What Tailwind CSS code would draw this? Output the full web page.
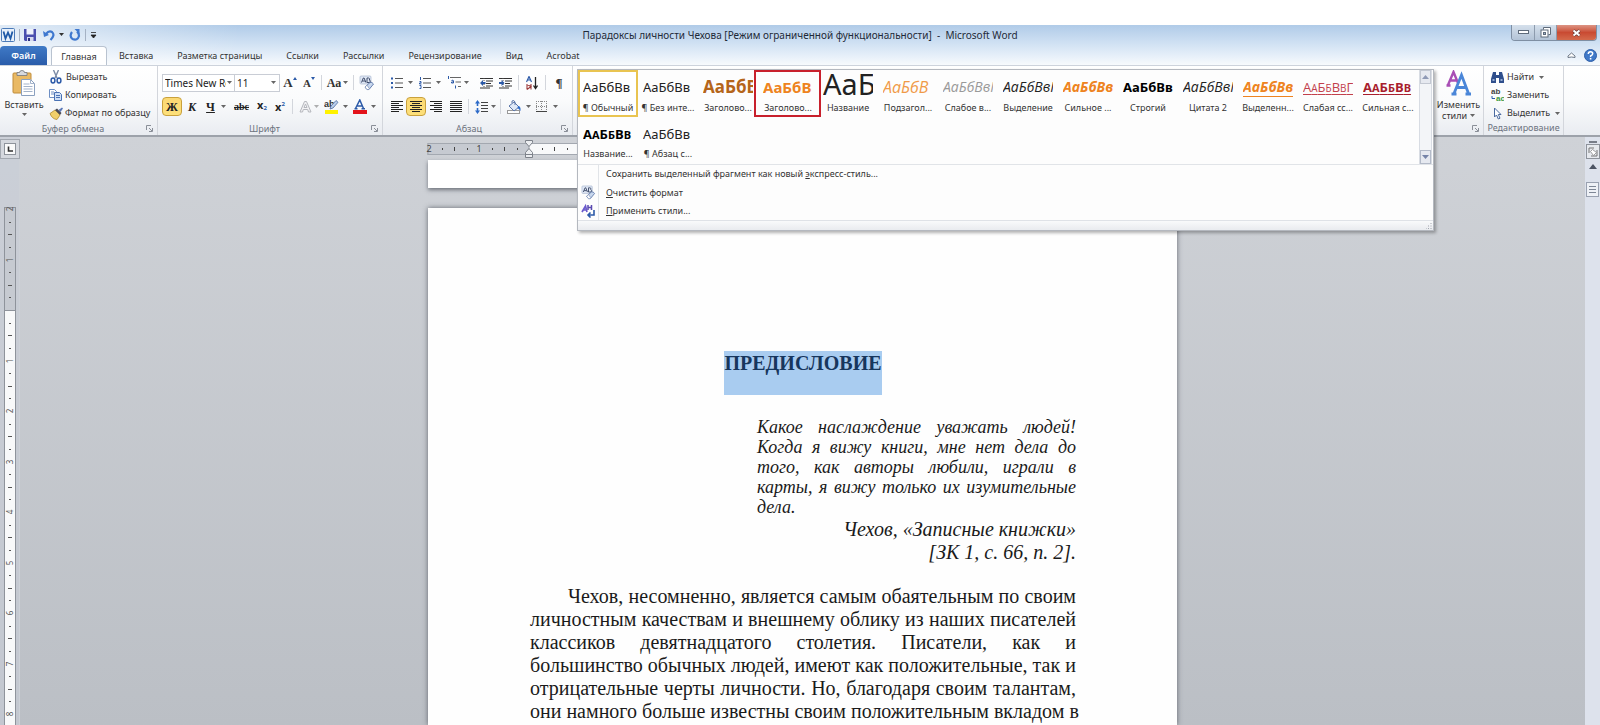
<!DOCTYPE html>
<html lang="ru">
<head>
<meta charset="utf-8">
<title>Парадоксы личности Чехова - Microsoft Word</title>
<script src="https://cdn.jsdelivr.net/npm/@tailwindcss/browser@4"></script>
</head>
<body class="h-screen overflow-hidden bg-white pt-[25px] flex flex-col font-['Noto_Sans','Open_Sans',sans-serif] text-[9px] leading-3 text-[#333]">

<svg width="0" height="0" class="absolute" aria-hidden="true">
  <defs>
    <symbol id="arr" viewBox="0 0 5 3"><path d="M0 0h5L2.500 3z" fill="#666"/></symbol>
    <symbol id="launch" viewBox="0 0 7 7"><path d="M.5 5V.5H5" fill="none" stroke="#8a8f98"/><path d="M3 3l3 3M6.500 3v3.500H3" fill="none" stroke="#8a8f98"/></symbol>
    <symbol id="eraser" viewBox="0 0 16 16"><rect x="1" y="1" width="11" height="8" rx="1" fill="#dfe7f4" stroke="#a9b7d0" stroke-width=".7"/><path d="M2.500 7.500L4.300 3h.8l1.800 4.500M3.300 6h2.800M8 7.500V3h1.500q1.500.2 1 2q1.500.8.300 2.500z" fill="none" stroke="#3f4c6b" stroke-width="1"/><path d="M6 12l5-4.500q2-.8 3.500 1.500L10 14.500H8z" fill="#c9d8ee" stroke="#5b76a8" stroke-width=".9"/><path d="M6 12l2-1.800 2.300 3.300L9.500 14.600H8z" fill="#fff" stroke="#7d91b8" stroke-width=".7"/></symbol>
  </defs>
</svg>

<!-- Title bar and tabs -->
<header class="shrink-0 bg-linear-to-b from-[#b0cbe8] via-[#d3e3f4] to-[#f7fafd]">
 <div class="bg-linear-to-r from-white/60 via-transparent via-15% to-transparent">
  <div class="flex items-start h-[21px]">
    <div class="flex items-center gap-1 w-[300px] h-[19px] pl-px">
      <svg width="14" height="14" viewBox="0 0 14 14"><rect x=".5" y=".5" width="13" height="13" rx="1" fill="#e8f1fb" stroke="#4b7ab8"/><path d="M2.500 3.500L4.500 10.500L7 4.500L9.500 10.500L11.500 3.500" fill="none" stroke="#1f5aa8" stroke-width="1.800"/></svg>
      <span class="w-px h-3 bg-[#a5b2c4]"></span>
      <button aria-label="Сохранить"><svg width="12" height="12" viewBox="0 0 12 12"><path d="M0 0h12v12H1L0 11z" fill="#4a4fae"/><rect x="2.500" y="0" width="7" height="5.500" fill="#eef2fb"/><rect x="3" y="8" width="6.500" height="4" fill="#d5d9ee"/><rect x="4" y="9" width="2" height="3" fill="#2c3180"/></svg></button>
      <button aria-label="Отменить" class="ml-[3px]"><svg width="12" height="12" viewBox="0 0 12 12"><path d="M3 5q3-4 6-2q3.500 3-1.500 8" fill="none" stroke="#3f78cf" stroke-width="2.200"/><path d="M0 2l1 6 5-2z" fill="#3f78cf"/></svg></button>
      <svg width="5" height="3"><path d="M0 0h5L2.500 3z" fill="#333"/></svg>
      <button aria-label="Повторить" class="ml-px"><svg width="12" height="12" viewBox="0 0 12 12"><path d="M3 3q-3 4 .5 7q5 2 6.500-3q0-3-2-4.500" fill="none" stroke="#3f78cf" stroke-width="2.200"/><path d="M5.500 0h5v5z" fill="#3f78cf"/></svg></button>
      <span class="w-px h-3 bg-[#a5b2c4]"></span>
      <button aria-label="Настройка панели"><svg width="7" height="8"><path d="M1 1.500h5M1 4h5L3.500 7z" fill="#222" stroke="#222" stroke-width=".8"/></svg></button>
    </div>
    <h1 class="flex-1 text-center text-[10px] leading-[20px] text-[#1e2a38]">Парадоксы личности Чехова [Режим ограниченной функциональности] &nbsp;-&nbsp; Microsoft Word</h1>
    <div class="w-[300px] flex justify-end pr-[3px]">
      <div class="flex h-[16px] rounded-b border border-t-0 border-[#7f8fa3] overflow-hidden">
        <button aria-label="Свернуть" class="w-[23px] grid place-items-center border-r border-[#8d9bad] bg-linear-to-b from-[#d5e0ec] to-[#b3c3d6]"><svg width="11" height="5"><rect x=".5" y=".5" width="10" height="3" fill="#fff" stroke="#5f6b7a"/></svg></button>
        <button aria-label="Свернуть в окно" class="w-[22px] grid place-items-center border-r border-[#8d9bad] bg-linear-to-b from-[#d5e0ec] to-[#b3c3d6]"><svg width="11" height="11"><path d="M3.500 2.500v-2h7v7h-2" fill="#fff" stroke="#5f6b7a"/><rect x="1" y="3" width="7" height="7" fill="#fff" stroke="#5f6b7a"/><rect x="3.500" y="5.500" width="2" height="2" fill="#9fb3cc" stroke="#5f6b7a"/></svg></button>
        <button aria-label="Закрыть" class="w-[39px] grid place-items-center bg-linear-to-b from-[#dc9484] via-[#c94a32] to-[#d46a4c]"><svg width="9" height="8" viewBox="0 0 9 8"><path d="M1.500 1.500l6 5M7.500 1.500l-6 5" stroke="#5c3a38" stroke-width="3.200"/><path d="M1.500 1.500l6 5M7.500 1.500l-6 5" stroke="#fff" stroke-width="2"/></svg></button>
      </div>
    </div>
  </div>
  <nav class="flex h-[19px] leading-[19px]">
    <button class="w-[47px] mr-1 rounded-t-sm bg-linear-to-b from-[#3f7ac6] to-[#2a5caa] text-white font-semibold">Файл</button>
    <button class="w-[56px] h-[20px] rounded-t-sm border border-b-0 border-[#b9c3d0] bg-white leading-[18px]">Главная</button>
    <button class="px-3">Вставка</button>
    <button class="px-3">Разметка страницы</button>
    <button class="px-3">Ссылки</button>
    <button class="px-3">Рассылки</button>
    <button class="px-3">Рецензирование</button>
    <button class="px-3">Вид</button>
    <button class="px-3">Acrobat</button>
    <div class="ml-auto flex items-center gap-2 pr-[3px]">
      <button aria-label="Свернуть ленту"><svg width="9" height="7"><path d="M1 5.500V4L4.500 1L8 4v1.500L4.500 5z" fill="#fff" stroke="#5f6b7a" stroke-width=".9"/></svg></button>
      <button aria-label="Справка"><svg width="13" height="13" viewBox="0 0 13 13"><circle cx="6.500" cy="6.500" r="6" fill="#3f78c8" stroke="#2f5fa8"/><path d="M4.300 5q0-2.200 2.200-2.200T8.700 4.800Q8.700 6 6.600 7v1" fill="none" stroke="#fff" stroke-width="1.500"/><rect x="5.800" y="8.900" width="1.600" height="1.600" fill="#fff"/></svg></button>
    </div>
  </nav>
 </div>
</header>

<!-- Ribbon -->
<section class="relative z-20 shrink-0 flex h-[72px] border-t border-t-[#cdd3dc] border-b-2 border-b-[#9da2aa] bg-linear-to-b from-white via-[#fafbfc] to-[#e9ecf1]">
  <div class="flex flex-col w-[158px] border-r border-[#d3d6dc]">
    <div class="flex flex-1">
      <button class="w-[48px] flex flex-col items-center pt-1">
        <svg width="24" height="26" viewBox="0 0 24 26"><rect x="1" y="3" width="18" height="20" rx="1" fill="#e9b964" stroke="#c08c3a"/><path d="M5 2.500h2.500q0-2 2.500-2t2.500 2H15v3H5z" fill="#d7d9de" stroke="#72767e" stroke-width=".8"/><path d="M9.500 9.500h9l4 4v12h-13z" fill="#fff" stroke="#8aa0bf"/><path d="M18.500 9.500v4h4M11.500 14h6M11.500 16.500h9M11.500 19h9M11.500 21.500h9" fill="none" stroke="#a3b3ca"/></svg>
        <span class="mt-[3px]">Вставить</span>
        <svg class="mt-[2px]" width="5" height="3"><use href="#arr"/></svg>
      </button>
      <div class="flex flex-col pt-[2px] whitespace-nowrap">
        <button class="flex items-center gap-[4px] h-[18px] pl-[2px]"><svg width="12" height="14" viewBox="0 0 12 14"><path d="M3.500 0l3.500 8M8.500 0L5 8" stroke="#7a8aa5" stroke-width="1.400"/><ellipse cx="3" cy="10.500" rx="1.900" ry="2.500" fill="none" stroke="#2c5aa8" stroke-width="1.500"/><ellipse cx="9" cy="10.500" rx="1.900" ry="2.500" fill="none" stroke="#2c5aa8" stroke-width="1.500"/></svg>Вырезать</button>
        <button class="flex items-center gap-[3px] h-[18px] pl-px"><svg width="13" height="12" viewBox="0 0 13 12"><path d="M.5.5h5l2 2v6h-7z" fill="#fff" stroke="#6d8fc4"/><path d="M2 3h3M2 5h3" stroke="#6d8fc4"/><path d="M5.500 3.500h5l2 2v6h-7z" fill="#cfe0f7" stroke="#4a72b4"/><path d="M7 6.500h4M7 8.500h4" stroke="#4a72b4"/></svg>Копировать</button>
        <button class="flex items-center gap-px h-[18px] pl-px"><svg width="15" height="13" viewBox="0 0 15 13"><path d="M1 6.500L6 3l5 5-3 4.500Q3 12 1 6.500z" fill="#f1cf6a" stroke="#b08a2e" stroke-width=".8"/><path d="M6 3l2-1.500 4.500 4.500L11 8z" fill="#4a4a55"/><path d="M9.500 3L13 .500l1 1L11.500 5z" fill="#5a78b8"/></svg>Формат по образцу</button>
      </div>
    </div>
    <div class="flex items-center h-[13px] pr-1 text-[#6c737e]"><span class="flex-1 text-center">Буфер обмена</span><svg width="7" height="7"><use href="#launch"/></svg></div>
  </div>

  <div class="flex flex-col w-[225px] border-r border-[#d3d6dc]">
    <div class="flex-1 pl-1 pt-[7px] flex flex-col gap-[5px]">
      <div class="flex items-center h-[19px]">
        <div class="relative w-[73px]"><select aria-label="Шрифт" class="appearance-none w-full h-[18px] pl-[2px] pr-2 border border-[#c9cdd5] bg-white text-[10px] text-[#222]"><option>Times New Ro</option></select><svg class="absolute right-[3px] top-[7px] pointer-events-none" width="5" height="3"><use href="#arr"/></svg></div>
        <div class="relative w-[45px]"><select aria-label="Размер шрифта" class="appearance-none w-full h-[18px] pl-[2px] border border-l-0 border-[#c9cdd5] bg-white text-[10px] text-[#222]"><option>11</option></select><svg class="absolute right-1 top-[7px] pointer-events-none" width="5" height="3"><use href="#arr"/></svg></div>
        <button class="w-[20px] flex justify-center font-['Liberation_Serif',serif] font-bold text-[13px]">A<svg width="4" height="3"><path d="M0 3L2 0l2 3z" fill="#2c5aa8"/></svg></button>
        <button class="w-[18px] flex justify-center font-['Liberation_Serif',serif] font-bold text-[11px]">A<svg width="4" height="3"><path d="M0 0h4L2 3z" fill="#2c5aa8"/></svg></button>
        <span class="w-px h-[15px] mx-[3px] bg-[#d3d6dc]"></span>
        <button class="w-[25px] flex items-center justify-center gap-[2px] font-['Liberation_Serif',serif] font-bold text-[12px]">Aa<svg width="5" height="3"><use href="#arr"/></svg></button>
        <span class="w-px h-[15px] mx-[3px] bg-[#d3d6dc]"></span>
        <button aria-label="Очистить формат" class="w-[20px] grid place-items-center"><svg width="16" height="16"><use href="#eraser"/></svg></button>
      </div>
      <div class="flex items-center h-[19px] font-['Liberation_Serif',serif] font-bold text-[12px] text-[#222]">
        <button class="w-[20px] h-[19px] rounded-sm border border-[#c9a13c] bg-linear-to-b from-[#fbd873] to-[#fde07a]">Ж</button>
        <button class="w-[20px] italic">К</button>
        <button class="w-[28px] flex items-center justify-center gap-[6px]"><span class="underline">Ч</span><svg width="5" height="3"><use href="#arr"/></svg></button>
        <button class="w-[23px] line-through text-[10px]">abc</button>
        <button class="w-[18px] font-['Noto_Sans',sans-serif] flex justify-center text-[11px]">x<span class="text-[6px] pt-[3px] text-[#2c5aa8]">2</span></button>
        <button class="w-[18px] font-['Noto_Sans',sans-serif] flex justify-center text-[11px]">x<span class="text-[6px] leading-[6px] text-[#2c5aa8]">2</span></button>
        <span class="w-px h-[15px] mx-[3px] bg-[#d3d6dc]"></span>
        <button aria-label="Эффекты текста" class="w-[26px] flex items-center justify-center gap-[2px]"><svg width="13" height="13" viewBox="0 0 13 13"><path d="M1 12L5.500 1.500h2L12 12H9.500L8.700 9.500H4.300L3.500 12zM5 7.500h3L6.500 4z" fill="#f2f2f4" stroke="#b5b7bd"/></svg><svg class="opacity-50" width="5" height="3"><use href="#arr"/></svg></button>
        <button aria-label="Цвет выделения" class="w-[28px] flex items-center justify-center gap-[4px]"><svg width="15" height="15" viewBox="0 0 15 15"><rect x="1" y="11" width="13" height="4" fill="#fff200"/><text x="0" y="8" font-size="9" font-weight="700" font-family="Liberation Sans, sans-serif" fill="#333">ab</text><path d="M6 10l1-3 5-5.500 2 1.800L9 9z" fill="#b9cdea" stroke="#4a6aa0" stroke-width=".8"/></svg><svg width="5" height="3"><use href="#arr"/></svg></button>
        <button aria-label="Цвет текста" class="w-[28px] flex items-center justify-center gap-[4px]"><svg width="14" height="15" viewBox="0 0 14 15"><rect x="0" y="11" width="14" height="4" fill="#e3131b"/><path d="M2.500 9.500L6.800 1l3.700 8.500M4 7h5M1.500 9.800h3M8.500 9.800H12" fill="none" stroke="#2c5aa8" stroke-width="1.500"/></svg><svg width="5" height="3"><use href="#arr"/></svg></button>
      </div>
    </div>
    <div class="flex items-center h-[13px] pr-1 text-[#6c737e]"><span class="flex-1 text-center">Шрифт</span><svg width="7" height="7"><use href="#launch"/></svg></div>
  </div>

  <div class="flex flex-col w-[190px] border-r border-[#d3d6dc]">
    <div class="flex-1 pl-[5px] pt-[7px] flex flex-col gap-[5px]">
      <div class="flex items-center h-[19px]">
        <button aria-label="Маркеры" class="w-[28px] flex items-center justify-center gap-[5px]"><svg width="12" height="12"><path d="M0 1.500h2M0 6h2M0 10.500h2" stroke="#2c5aa8" stroke-width="2"/><path d="M4 1.500h8M4 6h8M4 10.500h8" stroke="#555"/></svg><svg width="5" height="3"><use href="#arr"/></svg></button>
        <button aria-label="Нумерация" class="w-[28px] flex items-center justify-center gap-[5px]"><svg width="12" height="12"><path d="M1.500 0v3M.5 4.500h1.500v1.500H.5v1h2M.5 8.500h1.500v3H.5" stroke="#2c5aa8" fill="none"/><path d="M4 1.500h8M4 6h8M4 10.500h8" stroke="#555"/></svg><svg width="5" height="3"><use href="#arr"/></svg></button>
        <button aria-label="Многоуровневый список" class="w-[28px] flex items-center justify-center gap-[3px]"><svg width="14" height="13"><path d="M1.500 0v3M4.500 4.500q2-1 2 .5v2h-2v-1h2M8.500 9.500v3" stroke="#2c5aa8" fill="none"/><path d="M3 1.500h11M8.500 6h5.500M11 10.500h3" stroke="#666"/></svg><svg width="5" height="3"><use href="#arr"/></svg></button>
        <button aria-label="Уменьшить отступ" class="w-[19px] ml-[5px] grid place-items-center"><svg width="13" height="12"><path d="M0 1.500h13M6 4h7M6 6.500h5M6 9h7M0 11h10" stroke="#333"/><path d="M4 1v10" stroke="#555" stroke-dasharray="1 1"/><path d="M0 6l3-3v2h2.500v2H3v2z" fill="#2c5aa8"/></svg></button>
        <button aria-label="Увеличить отступ" class="w-[19px] grid place-items-center"><svg width="13" height="12"><path d="M0 1.500h13M6 4h7M6 6.500h5M6 9h7M0 11h10" stroke="#333"/><path d="M4 1v10" stroke="#555" stroke-dasharray="1 1"/><path d="M5.500 6l-3-3v2H0v2h2.500v2z" fill="#2c5aa8"/></svg></button>
        <span class="w-px h-[15px] mx-[3px] bg-[#d3d6dc]"></span>
        <button aria-label="Сортировка" class="w-[20px] grid place-items-center"><svg width="12" height="14"><path d="M.5 6L3 .5 5.500 6M1.500 4h3" fill="none" stroke="#2c5aa8" stroke-width="1.200"/><path d="M1 8v5.500M5 8v5.500M1 8.500l4 2-4 3" fill="none" stroke="#9c3a3a" stroke-width="1.100"/><path d="M9.500 1v11M7.500 9.500l2 3 2-3" fill="none" stroke="#222" stroke-width="1.300"/></svg></button>
        <span class="w-px h-[15px] mx-[3px] bg-[#d3d6dc]"></span>
        <button class="w-[20px] text-[13px] font-bold text-[#333] font-['Liberation_Serif',serif]">¶</button>
      </div>
      <div class="flex items-center h-[19px]">
        <button aria-label="По левому краю" class="w-[18px] grid place-items-center"><svg width="12" height="11"><path d="M0 .5h12M0 2.500h8M0 4.500h12M0 6.500h8M0 8.500h12M0 10.500h8" stroke="#222"/></svg></button>
        <button aria-label="По центру" class="w-[20px] h-[19px] grid place-items-center rounded-sm border border-[#c9a13c] bg-linear-to-b from-[#fbd873] to-[#fde07a]"><svg width="12" height="11"><path d="M0 .5h12M2 2.500h8M0 4.500h12M2 6.500h8M0 8.500h12M2 10.500h8" stroke="#222"/></svg></button>
        <button aria-label="По правому краю" class="w-[20px] grid place-items-center"><svg width="12" height="11"><path d="M0 .5h12M4 2.500h8M0 4.500h12M4 6.500h8M0 8.500h12M4 10.500h8" stroke="#222"/></svg></button>
        <button aria-label="По ширине" class="w-[20px] grid place-items-center"><svg width="12" height="11"><path d="M0 .5h12M0 2.500h12M0 4.500h12M0 6.500h12M0 8.500h12M0 10.500h12" stroke="#222"/></svg></button>
        <span class="w-px h-[15px] ml-[2px] mr-[4px] bg-[#d3d6dc]"></span>
        <button aria-label="Интервал" class="w-[24px] flex items-center justify-center gap-[3px]"><svg width="13" height="14"><path d="M2.500 0L5 3.500H3.300V6H1.700V3.500H0zM2.500 14L5 10.500H3.300V8H1.700v2.500H0z" fill="#2c6ac8"/><path d="M6 2.500h7M6 5.500h7M6 8.500h7M6 11.500h7" stroke="#444"/></svg><svg width="5" height="3"><use href="#arr"/></svg></button>
        <span class="w-px h-[15px] mx-[3px] bg-[#d3d6dc]"></span>
        <button aria-label="Заливка" class="w-[30px] flex items-center justify-center gap-[4px]"><svg width="15" height="14"><rect x=".5" y="10.500" width="12" height="3" fill="#fff" stroke="#999"/><path d="M2 6l5-4 5 5-5 4z" fill="#dfe9f7" stroke="#5b76a8"/><path d="M5 3V1q2-1.500 3 1v3" fill="none" stroke="#5b76a8"/><path d="M11 6q3 0 2.500 5-1.500-2-3-3z" fill="#2c6ac8"/></svg><svg width="5" height="3"><use href="#arr"/></svg></button>
        <button aria-label="Границы" class="w-[26px] flex items-center justify-center gap-[6px]"><svg width="11" height="11"><path d="M.5 0v11M10.500 0v11M5.500 0v11M0 .5h11M0 5.500h11" fill="none" stroke="#888" stroke-dasharray="1 1"/><path d="M0 10.500h11" stroke="#444"/></svg><svg width="5" height="3"><use href="#arr"/></svg></button>
      </div>
    </div>
    <div class="flex items-center h-[13px] pr-1 text-[#6c737e]"><span class="flex-1 pr-[6px] text-center">Абзац</span><svg width="7" height="7"><use href="#launch"/></svg></div>
  </div>

  <!-- Style gallery, expanded over the page -->
  <div class="relative flex-1">
    <div class="absolute top-[3px] left-1 right-0 border border-[#b4b8bf] bg-[#fdfdfd] shadow-[2px_2px_3px_rgba(0,0,0,0.3)]">
      <div class="flex border-b border-[#e1e4e8]">
        <div class="flex-1 flex flex-wrap content-start h-[94px] text-center whitespace-nowrap">
          <button class="w-[60px] h-[47px] bg-white outline-2 -outline-offset-2 outline-[#e9c451] ring-1 ring-inset ring-[#c9a13c]"><span class="block mx-[5px] h-[24px] mt-1 overflow-hidden text-left text-[13px] leading-[20px] text-[#222]">АаБбВв</span><span class="block leading-[14px]">¶ Обычный</span></button>
          <button class="w-[60px] h-[47px]"><span class="block mx-[5px] h-[24px] mt-1 overflow-hidden text-left text-[13px] leading-[20px] text-[#222]">АаБбВв</span><span class="block leading-[14px]">¶ Без инте...</span></button>
          <button class="w-[60px] h-[47px]"><span class="block mx-[5px] h-[24px] mt-1 overflow-hidden text-left text-[17px] leading-[20px] font-bold text-[#b5651a]">АаБбВ</span><span class="block leading-[14px]">Заголово...</span></button>
          <button class="relative w-[60px] h-[47px]"><span class="block mx-[5px] h-[24px] mt-1 overflow-hidden text-left text-[15px] leading-[20px] font-bold text-[#ee8320]">АаБбВ</span><span class="block leading-[14px]">Заголово...</span><span class="absolute top-0 -left-1 -right-[3px] h-[47px] border-2 border-[#c8202c]"></span></button>
          <button class="w-[60px] h-[47px]"><span class="block mx-[5px] h-[28px] overflow-hidden text-left text-[29px] leading-[22px] text-[#222]">АаБ</span><span class="block leading-[14px]">Название</span></button>
          <button class="w-[60px] h-[47px]"><span class="block mx-[5px] h-[24px] mt-1 overflow-hidden text-left font-['Open_Sans',sans-serif] text-[16px] leading-[20px] italic text-[#f09a48]">АаБбВ</span><span class="block leading-[14px]">Подзагол...</span></button>
          <button class="w-[60px] h-[47px]"><span class="block mx-[5px] h-[24px] mt-1 overflow-hidden text-left font-['Open_Sans',sans-serif] text-[14px] leading-[20px] italic text-[#999]">АаБбВвГ</span><span class="block leading-[14px]">Слабое в...</span></button>
          <button class="w-[60px] h-[47px]"><span class="block mx-[5px] h-[24px] mt-1 overflow-hidden text-left font-['Open_Sans',sans-serif] text-[14px] leading-[20px] italic text-[#222]">АаБбВвГ</span><span class="block leading-[14px]">Выделение</span></button>
          <button class="w-[60px] h-[47px]"><span class="block mx-[5px] h-[24px] mt-1 overflow-hidden text-left font-['Open_Sans',sans-serif] text-[14px] leading-[20px] italic font-bold text-[#ee8320]">АаБбВв</span><span class="block leading-[14px]">Сильное ...</span></button>
          <button class="w-[60px] h-[47px]"><span class="block mx-[5px] h-[24px] mt-1 overflow-hidden text-left text-[13px] leading-[20px] font-bold text-black">АаБбВв</span><span class="block leading-[14px]">Строгий</span></button>
          <button class="w-[60px] h-[47px]"><span class="block mx-[5px] h-[24px] mt-1 overflow-hidden text-left font-['Open_Sans',sans-serif] text-[14px] leading-[20px] italic text-[#222]">АаБбВвГ</span><span class="block leading-[14px]">Цитата 2</span></button>
          <button class="w-[60px] h-[47px]"><span class="block mx-[5px] h-[24px] mt-1 overflow-hidden text-left font-['Open_Sans',sans-serif] text-[14px] leading-[20px] italic font-bold underline underline-offset-4 decoration-1 text-[#ee8320]">АаБбВв</span><span class="block leading-[14px]">Выделенн...</span></button>
          <button class="w-[60px] h-[47px]"><span class="block mx-[5px] h-[24px] mt-1 overflow-hidden text-left font-['Open_Sans',sans-serif] text-[13px] leading-[20px] underline underline-offset-2 text-[#c2404c]">А<span class="text-[10px]">А</span>Б<span class="text-[10px]">Б</span>В<span class="text-[10px]">В</span>Г</span><span class="block leading-[14px]">Слабая сс...</span></button>
          <button class="w-[60px] h-[47px]"><span class="block mx-[5px] h-[24px] mt-1 overflow-hidden text-left font-['Open_Sans',sans-serif] text-[13px] leading-[20px] font-bold underline underline-offset-2 text-[#a81e2d]">А<span class="text-[11px]">А</span>Б<span class="text-[11px]">Б</span>В<span class="text-[11px]">В</span></span><span class="block leading-[14px]">Сильная с...</span></button>
          <button class="w-[60px] h-[47px]"><span class="block mx-[5px] h-[23px] mt-[3px] overflow-hidden text-left font-['Open_Sans',sans-serif] text-[13px] leading-[20px] font-bold text-black">А<span class="text-[11px]">А</span>Б<span class="text-[11px]">Б</span>В<span class="text-[11px]">В</span></span><span class="block leading-[14px]">Название...</span></button>
          <button class="w-[60px] h-[47px]"><span class="block mx-[5px] h-[23px] mt-[3px] overflow-hidden text-left text-[13px] leading-[20px] text-[#222]">АаБбВв</span><span class="block leading-[14px]">¶ Абзац с...</span></button>
        </div>
        <div class="w-[13px] mr-px flex flex-col justify-between border-x border-[#d8dce3] bg-[#f3f5f8]">
          <button aria-label="Вверх" class="h-[14px] grid place-items-center border border-[#c3c8d2] bg-[#e6e9f0]"><svg width="7" height="4"><path d="M0 4L3.500 0 7 4z" fill="#8e99b5"/></svg></button>
          <button aria-label="Вниз" class="h-[14px] grid place-items-center border border-[#b3bac8] bg-[#e6e9f0]"><svg width="7" height="4"><path d="M0 0h7L3.500 4z" fill="#7684a8"/></svg></button>
        </div>
      </div>
      <div class="flex flex-col">
        <button class="flex h-[18px] items-center"><span class="w-[21px] h-full border-r border-[#e1e4e8]"></span><span class="pl-[7px]">Сохранить выделенный фрагмент как новый <u>э</u>кспресс-стиль...</span></button>
        <button class="flex h-[19px] items-center"><span class="w-[21px] h-full border-r border-[#e1e4e8] grid place-items-center"><svg width="15" height="15"><use href="#eraser"/></svg></span><span class="pl-[7px]"><u>О</u>чистить формат</span></button>
        <button class="flex h-[18px] items-center"><span class="w-[21px] h-full border-r border-[#e1e4e8] grid place-items-center"><svg width="14" height="14" viewBox="0 0 14 14"><path d="M1 8L4.500 2 6 8M2.500 6h3" fill="none" stroke="#6a5acd" stroke-width="1.700"/><path d="M7 1v5M10.500 1v5M7 3.500h3.500" stroke="#5a4ab0" stroke-width="1.500"/><path d="M13 6v5H8M9.500 8.500L7 11l2.500 2.500" fill="none" stroke="#2c5aa8" stroke-width="1.600"/></svg></span><span class="pl-[7px]"><u>П</u>рименить стили...</span></button>
      </div>
      <div class="h-[10px] flex justify-end items-end p-px border-t border-[#dfe2e7] bg-linear-to-b from-[#f9fafb] to-[#e9ebef]"><svg width="6" height="6"><path d="M5 0v1M5 2.500v1M5 5v1M2.500 2.500v1M2.500 5v1M0 5v1" stroke="#a0a5ae"/></svg></div>
    </div>
  </div>

  <div class="flex flex-col w-[50px] border-r border-[#d3d6dc]">
    <button class="flex-1 flex flex-col items-center pt-[4px] leading-[11px]">
      <svg class="shrink-0" width="26" height="26" viewBox="0 0 26 26"><path d="M2 15L7.500 2l4.500 11M4 10.500h7M.5 15.500h4" fill="none" stroke="#a94fb5" stroke-width="2.400"/><path d="M8 23.500L15.500 5l7 18.500M10.500 17.500h9.500M5.500 24h5M19.500 24H25" fill="none" stroke="#4a86d8" stroke-width="2.800"/></svg>
      <span class="mt-[3px]">Изменить</span><span class="flex items-center gap-[3px]">стили <svg width="5" height="3"><use href="#arr"/></svg></span>
    </button>
    <div class="flex items-center justify-end h-[13px] pr-1"><svg width="7" height="7"><use href="#launch"/></svg></div>
  </div>
  <div class="flex flex-col w-[80px] mr-[36px] border-r border-[#d3d6dc]">
    <div class="flex-1 flex flex-col pt-[2px] pl-[7px]">
      <button class="flex items-center gap-[3px] h-[18px]"><svg width="13" height="12" viewBox="0 0 13 12"><path d="M2 1h3v3h3V1h3l2 7v4H8V7H5v5H0V8z" fill="#2f4f8c"/><path d="M1.500 9h2M9.500 9h2" stroke="#b9cdea" stroke-width="1.500"/></svg>Найти<svg class="ml-[2px]" width="5" height="3"><use href="#arr"/></svg></button>
      <button class="flex items-center gap-[3px] h-[18px]"><svg width="13" height="14" viewBox="0 0 13 14"><text x="0" y="6" font-size="8" font-weight="700" font-family="Liberation Sans, sans-serif" fill="#444">ab</text><text x="5" y="13" font-size="8" font-weight="700" font-family="Liberation Sans, sans-serif" fill="#3c9a3c">ac</text><path d="M1 8v2.500h3" fill="none" stroke="#2c5aa8"/></svg>Заменить</button>
      <button class="flex items-center gap-[3px] h-[18px]"><svg width="13" height="13" viewBox="0 0 13 13"><path d="M3.500 1v9l2-2 1.800 4 1.700-.8L7.300 7.500H10z" fill="#fff" stroke="#4a6aa0"/></svg>Выделить<svg class="ml-[2px]" width="5" height="3"><use href="#arr"/></svg></button>
    </div>
    <div class="h-[13px] text-center text-[#6c737e]">Редактирование</div>
  </div>
</section>

<!-- Workspace -->
<main class="flex-1 min-h-0 flex overflow-hidden bg-linear-to-b from-[#cfd2d7] to-[#bbbfc5]">
  <div class="w-5 shrink-0 flex flex-col border-r border-[#cdd1d7] bg-[#c8cdd7]/60">
    <button aria-label="Выбор табуляции" class="mt-[2px] w-[20px] h-[20px] shrink-0 grid place-items-center border border-[#a3a8b0] bg-[#d5d8de]"><svg width="12" height="12"><rect x=".5" y=".5" width="11" height="11" fill="#fafafa" stroke="#8e939b"/><path d="M4.500 3.500v4.500H9" fill="none" stroke="#333" stroke-width="1.600"/></svg></button>
    <svg id="vruler" class="mt-12 ml-1 flex-1 min-h-0" width="12" font-family="Noto Sans, sans-serif" font-size="8" fill="#555" text-anchor="middle"></svg>
  </div>

  <div class="flex-1 min-w-0 flex flex-col items-center">
    <div class="w-[749px] h-[23px] shrink-0 pt-[6px]">
      <svg id="hruler" class="block overflow-visible" width="749" height="16" font-family="Noto Sans, sans-serif" font-size="9" fill="#444" text-anchor="middle"></svg>
    </div>
    <div class="w-[749px] h-[28px] mb-5 shrink-0 bg-white shadow-[0_2px_4px_rgba(70,75,85,0.7)]"></div>
    <article class="w-[749px] flex-1 min-h-0 overflow-hidden pl-[102px] pr-[101px] pt-[143px] bg-[#fefefe] shadow-[0_0_5px_rgba(70,75,85,0.8)] font-['Liberation_Serif',serif] text-[20px] text-[#1a1a1a]">
      <div class="flex justify-center"><h2 class="bg-[#a9ccf0] h-[44px] leading-[25px] font-bold text-[#17365d]">ПРЕДИСЛОВИЕ</h2></div>
      <blockquote class="mt-[22px] ml-[227px] italic">
        <p class="text-[18px] leading-[20px]">
          <span class="block [text-align-last:justify]">Какое наслаждение уважать людей!</span>
          <span class="block [text-align-last:justify]">Когда я вижу книги, мне нет дела до</span>
          <span class="block [text-align-last:justify]">того, как авторы любили, играли в</span>
          <span class="block [text-align-last:justify]">карты, я вижу только их изумительные</span>
          <span class="block">дела.</span>
        </p>
        <p class="mt-px text-right leading-[23px]">Чехов, «Записные книжки»<br>[ЗК 1, с. 66, п. 2].</p>
      </blockquote>
      <p class="mt-[21px] leading-[23px]">
        <span class="block whitespace-nowrap pl-[38px] [text-align-last:justify]">Чехов, несомненно, является самым обаятельным по своим</span>
        <span class="block whitespace-nowrap [text-align-last:justify]">личностным качествам и внешнему облику из наших писателей</span>
        <span class="block whitespace-nowrap [text-align-last:justify]">классиков девятнадцатого столетия. Писатели, как и</span>
        <span class="block whitespace-nowrap [text-align-last:justify]">большинство обычных людей, имеют как положительные, так и</span>
        <span class="block whitespace-nowrap [text-align-last:justify]">отрицательные черты личности. Но, благодаря своим талантам,</span>
        <span class="block whitespace-nowrap [text-align-last:justify]">они намного больше известны своим положительным вкладом в</span>
      </p>
    </article>
  </div>

  <div class="w-[15px] shrink-0 flex flex-col items-center bg-[#dde2ec]">
    <span class="w-2 h-[2px] mt-1 bg-[#777d88]"></span>
    <button aria-label="Линейка" class="w-[14px] h-[15px] mt-px grid place-items-center border border-[#8e939b] bg-[#e6e9ee]"><svg width="10" height="10"><path d="M1 6V1h5M3 9h6V3" fill="none" stroke="#777"/><path d="M2.500 4.500l2-2 4 3-3 3z" fill="#fff" stroke="#888" stroke-width=".8"/></svg></button>
    <button aria-label="Прокрутить вверх" class="h-[14px] grid place-items-center"><svg width="8" height="5"><path d="M0 5L4 0l4 5z" fill="#4c5463"/></svg></button>
    <button aria-label="Ползунок" class="w-[13px] h-[15px] mt-[9px] grid place-items-center border border-[#99a1b0] bg-[#eef1f6]"><svg width="7" height="7"><path d="M0 .5h7M0 3.500h7M0 6.500h7" stroke="#7e8796"/></svg></button>
  </div>
</main>

<script>
// Ruler scales: a figure per centimetre, a dash per half and a dot per quarter
function scale(cm, from, to, zero, vertical) {
  let out = '';
  for (let q = from; q <= to; q++) {
    if (q === 0) continue;
    const p = Math.round(zero + q * cm / 4);
    if (q % 4 === 0) {
      out += vertical ? `<text transform="translate(9 ${p}) rotate(-90)">${Math.abs(q / 4)}</text>`
                      : `<text x="${p}" y="9">${Math.abs(q / 4)}</text>`;
    } else {
      const l = q % 2 === 0 ? 4 : 2;
      out += vertical ? `<rect x="${6 - l / 2}" y="${p}" width="${l}" height="1"/>`
                      : `<rect x="${p}" y="${6 - l / 2}" width="1" height="${l}"/>`;
    }
  }
  return out;
}
document.getElementById('vruler').innerHTML =
  '<rect x=".5" y=".5" width="11" height="2000" fill="#f8f9fa" stroke="#8e939b"/><rect x=".5" y=".5" width="11" height="103" fill="#c6cad1" stroke="#8e939b"/>' + scale(50.5, -8, 33, 103, true);
document.getElementById('hruler').innerHTML =
  '<rect x="0" y=".5" width="749" height="11" fill="#f8f9fa" stroke="#a3a8b0"/><rect x="0" y=".5" width="101" height="11" fill="#c6cad1" stroke="#a3a8b0"/>' + scale(50, -8, 12, 101, false) +
  '<path d="M97.500 -2.500h7v2l-3.500 4-3.500-4zM101 5.500l3.500 4v5h-7v-5zM97.500 11.500h7" fill="#eceef1" stroke="#7d828a"/>';
</script>
</body>
</html>
